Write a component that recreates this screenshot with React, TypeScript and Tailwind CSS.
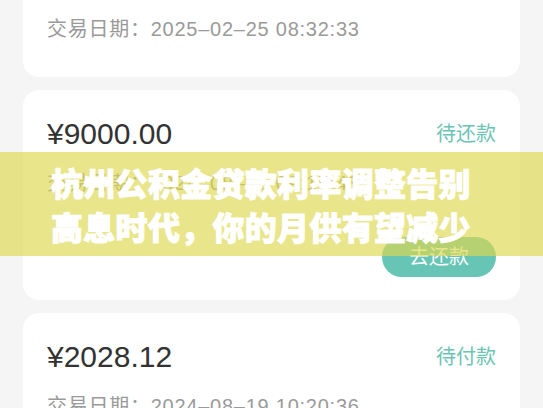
import React from "react";

function AmountRow({ amount, status }: { amount: string; status: string }) {
  return (
    <div className="flex h-[40px] items-center justify-between">
      <span className="text-[30px] leading-[40px] text-[#333333]">{amount}</span>
      <span className="text-[20px] leading-[28px] text-[#6cc4b4]">{status}</span>
    </div>
  );
}

function DateRow({ value, className = "" }: { value: string; className?: string }) {
  return (
    <div className={"text-[20px] leading-[28px] tracking-[0.75px] text-[#9a9a9a] " + className}>
      交易日期：{value}
    </div>
  );
}

export default function App() {
  return (
    <div className="relative h-[408px] w-[543px] overflow-hidden bg-[#f5f5f5] font-['Liberation_Sans','Noto_Sans_CJK_SC',sans-serif]">
      <div className="flex flex-col gap-[13px] px-[23px]">
        <div className="rounded-b-[16px] bg-white px-6 pb-[34px] pt-[15px]">
          <DateRow value="2025–02–25 08:32:33" />
        </div>
        <div className="rounded-[16px] bg-white px-6 pb-[23px] pt-6">
          <AmountRow amount="¥9000.00" status="待还款" />
          <DateRow value="2024–08–26 09:15:48" className="mt-[15px]" />
          <div className="mt-[40px] flex justify-end">
            <button className="flex h-[40px] w-[114px] items-center justify-center rounded-full bg-[#66c5b5] text-[20px] text-white">
              去还款
            </button>
          </div>
        </div>
        <div className="rounded-[16px] bg-white px-6 pb-[23px] pt-6">
          <AmountRow amount="¥2028.12" status="待付款" />
          <DateRow value="2024–08–19 10:20:36" className="mt-[15px]" />
        </div>
      </div>
      <div className="absolute left-0 right-0 top-[152px] h-[104px] bg-[rgba(222,216,78,0.66)] pl-[51px] pt-[8px] font-['Noto_Sans_CJK_SC',sans-serif] text-[32px] font-black leading-[44px] tracking-[0.3px] text-white [-webkit-text-stroke:1px_#ffffff]">
        <div>杭州公积金贷款利率调整告别</div>
        <div>高息时代，你的月供有望减少</div>
      </div>
    </div>
  );
}
